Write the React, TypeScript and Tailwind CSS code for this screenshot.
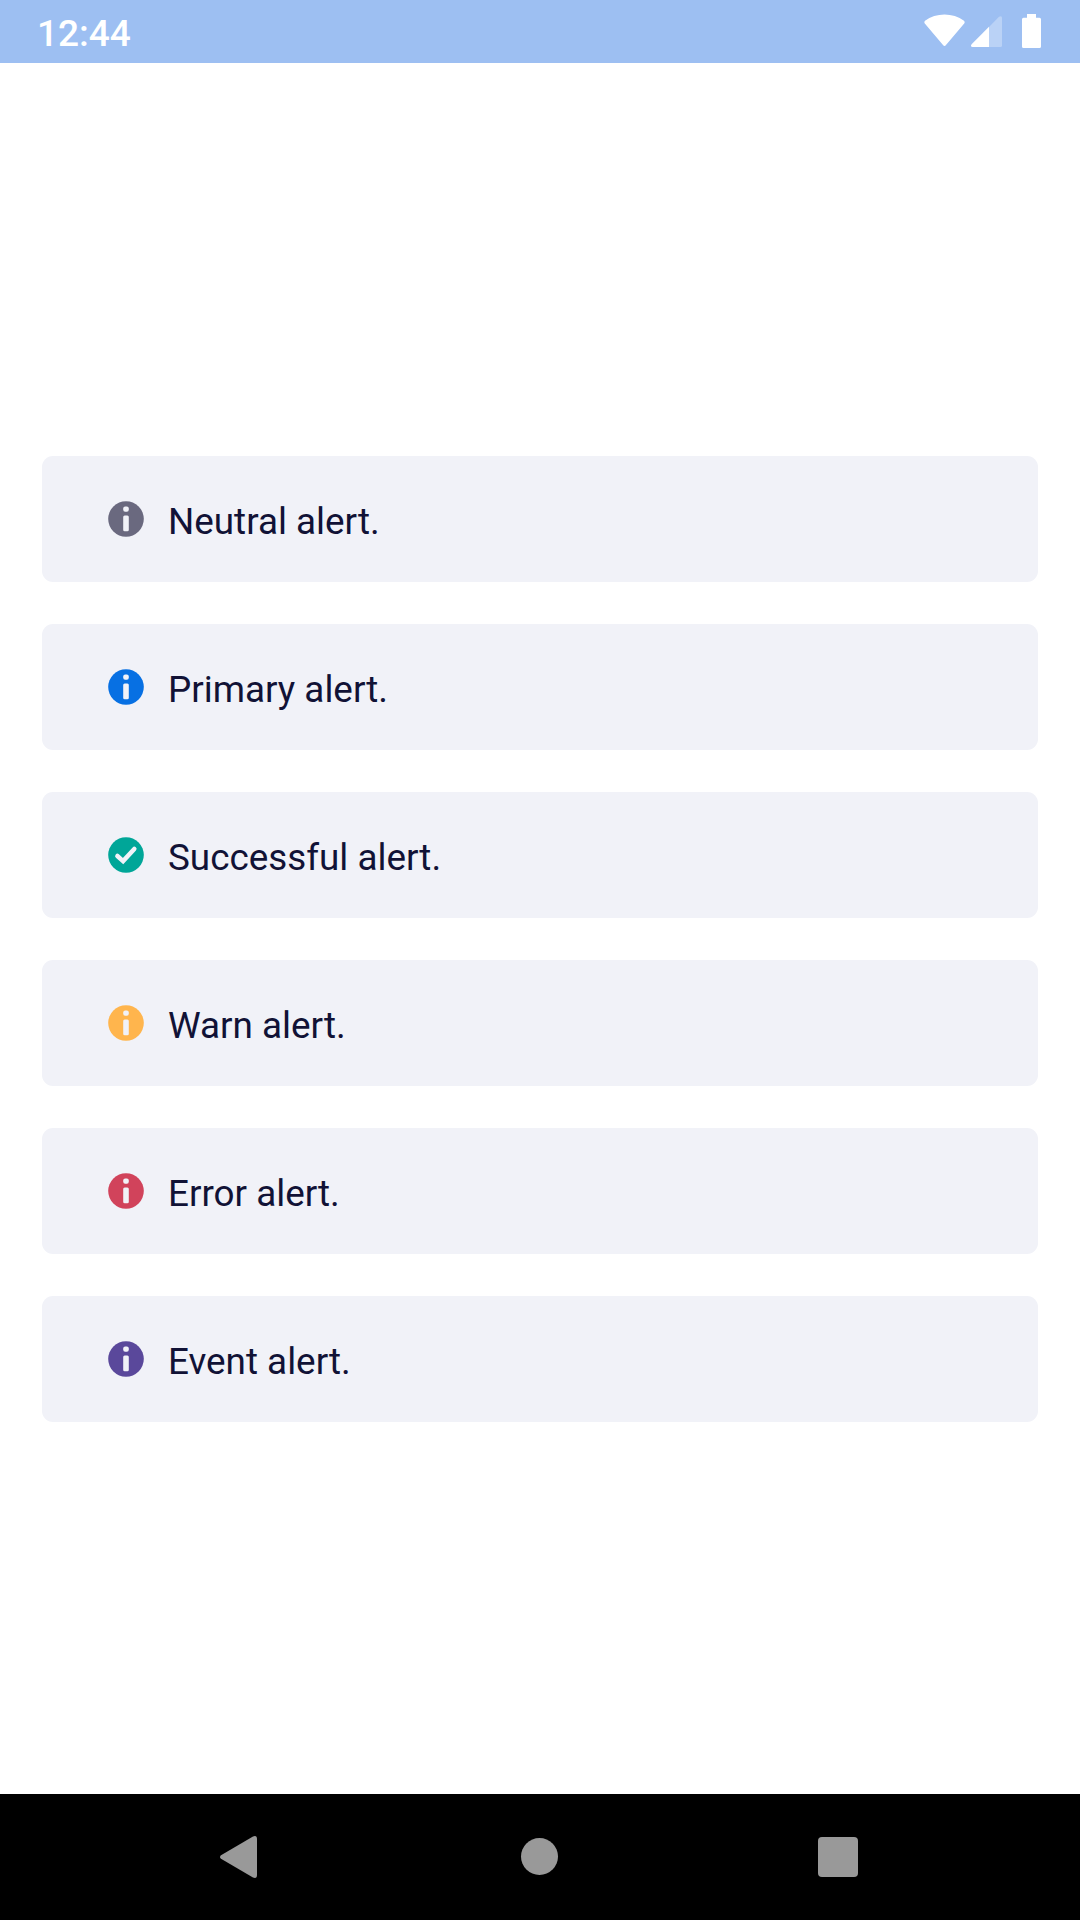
type AlertKind = 'info' | 'check';

interface AlertItem {
  label: string;
  color: string;
  kind: AlertKind;
}

const alerts: AlertItem[] = [
  { label: 'Neutral alert.', color: 'text-[#6a697f]', kind: 'info' },
  { label: 'Primary alert.', color: 'text-[#0770e3]', kind: 'info' },
  { label: 'Successful alert.', color: 'text-[#00a698]', kind: 'check' },
  { label: 'Warn alert.', color: 'text-[#ffb54d]', kind: 'info' },
  { label: 'Error alert.', color: 'text-[#d1435b]', kind: 'info' },
  { label: 'Event alert.', color: 'text-[#5a489b]', kind: 'info' },
];

function AlertIcon({ kind, color }: { kind: AlertKind; color: string }) {
  return (
    <svg viewBox="0 0 36 36" className={`size-9 shrink-0 ${color}`}>
      <circle cx="18" cy="18" r="17.8" fill="currentColor" />
      {kind === 'info' ? (
        <g fill="#f1f2f8">
          <rect x="15.2" y="5.4" width="5.6" height="5.4" rx="2" />
          <rect x="15.2" y="14.4" width="5.6" height="15.8" rx="1.5" />
        </g>
      ) : (
        <path
          d="M9.4 19 L15.1 24.1 L26.3 11.9"
          fill="none"
          stroke="#f1f2f8"
          strokeWidth="4.5"
          strokeLinecap="round"
          strokeLinejoin="miter"
        />
      )}
    </svg>
  );
}

function AlertCard({ label, color, kind }: AlertItem) {
  return (
    <div className="flex h-[126px] items-center rounded-[11px] bg-[#f1f2f8] pl-[66px]">
      <AlertIcon kind={kind} color={color} />
      <span className="pt-[5px] pl-6 text-[36.85px] leading-[42px] text-[#111236]">{label}</span>
    </div>
  );
}

function StatusBar() {
  return (
    <header className="flex h-[63px] items-start justify-between bg-[#9dbff2] pr-[39px] pl-[37px] text-white">
      <span className="pt-[13px] text-[37px] leading-[42px] font-medium">12:44</span>
      <div className="flex items-start pt-3.5">
        <svg viewBox="0 0 41 32" className="h-8 w-[41px]">
          <path
            d="M1 6.8 C12 -1.6 29 -1.6 40 6.8 Q41.2 8.2 40.2 9.6 L22 31 Q20.5 32.8 19 31 L0.8 9.6 Q-0.2 8.2 1 6.8Z"
            fill="currentColor"
          />
        </svg>
        <svg viewBox="0 0 31 31" className="mt-0.5 ml-1.5 h-[31px] w-[31px]">
          <path d="M18 11 L28 0.8 Q31 -0.8 31 2 V29.5 Q31 31 29.5 31 H18Z" fill="currentColor" opacity="0.3" />
          <path d="M18 10.8 V31 H1.5 Q-1 30.6 0.6 28.2Z" fill="currentColor" />
        </svg>
        <svg viewBox="0 0 19 34" className="ml-5 h-[34px] w-[19px]">
          <path
            d="M5 0 H14 V3.8 H17.5 Q19 3.8 19 5.3 V32.5 Q19 34 17.5 34 H1.5 Q0 34 0 32.5 V5.3 Q0 3.8 1.5 3.8 H5Z"
            fill="currentColor"
          />
        </svg>
      </div>
    </header>
  );
}

function NavigationBar() {
  return (
    <nav className="flex h-[126px] items-center bg-black pl-[220px] text-[#999999]">
      <svg viewBox="0 0 37 42" className="h-[42px] w-[37px]">
        <path
          d="M33 0.5 Q37 -1 37 3 V39 Q37 43 33 41.5 L1 22.8 Q-1 21 1 19.2Z"
          fill="currentColor"
        />
      </svg>
      <div className="-mt-px ml-[264px] size-[37px] rounded-full bg-[#999999]" />
      <div className="ml-[260px] size-10 rounded bg-[#999999]" />
    </nav>
  );
}

export default function App() {
  return (
    <div className="flex h-[1920px] w-[1080px] flex-col bg-white font-['Roboto',sans-serif]">
      <StatusBar />
      <main className="flex flex-1 flex-col gap-[42px] px-[42px] pt-[393px]">
        {alerts.map((alert) => (
          <AlertCard key={alert.label} {...alert} />
        ))}
      </main>
      <NavigationBar />
    </div>
  );
}
